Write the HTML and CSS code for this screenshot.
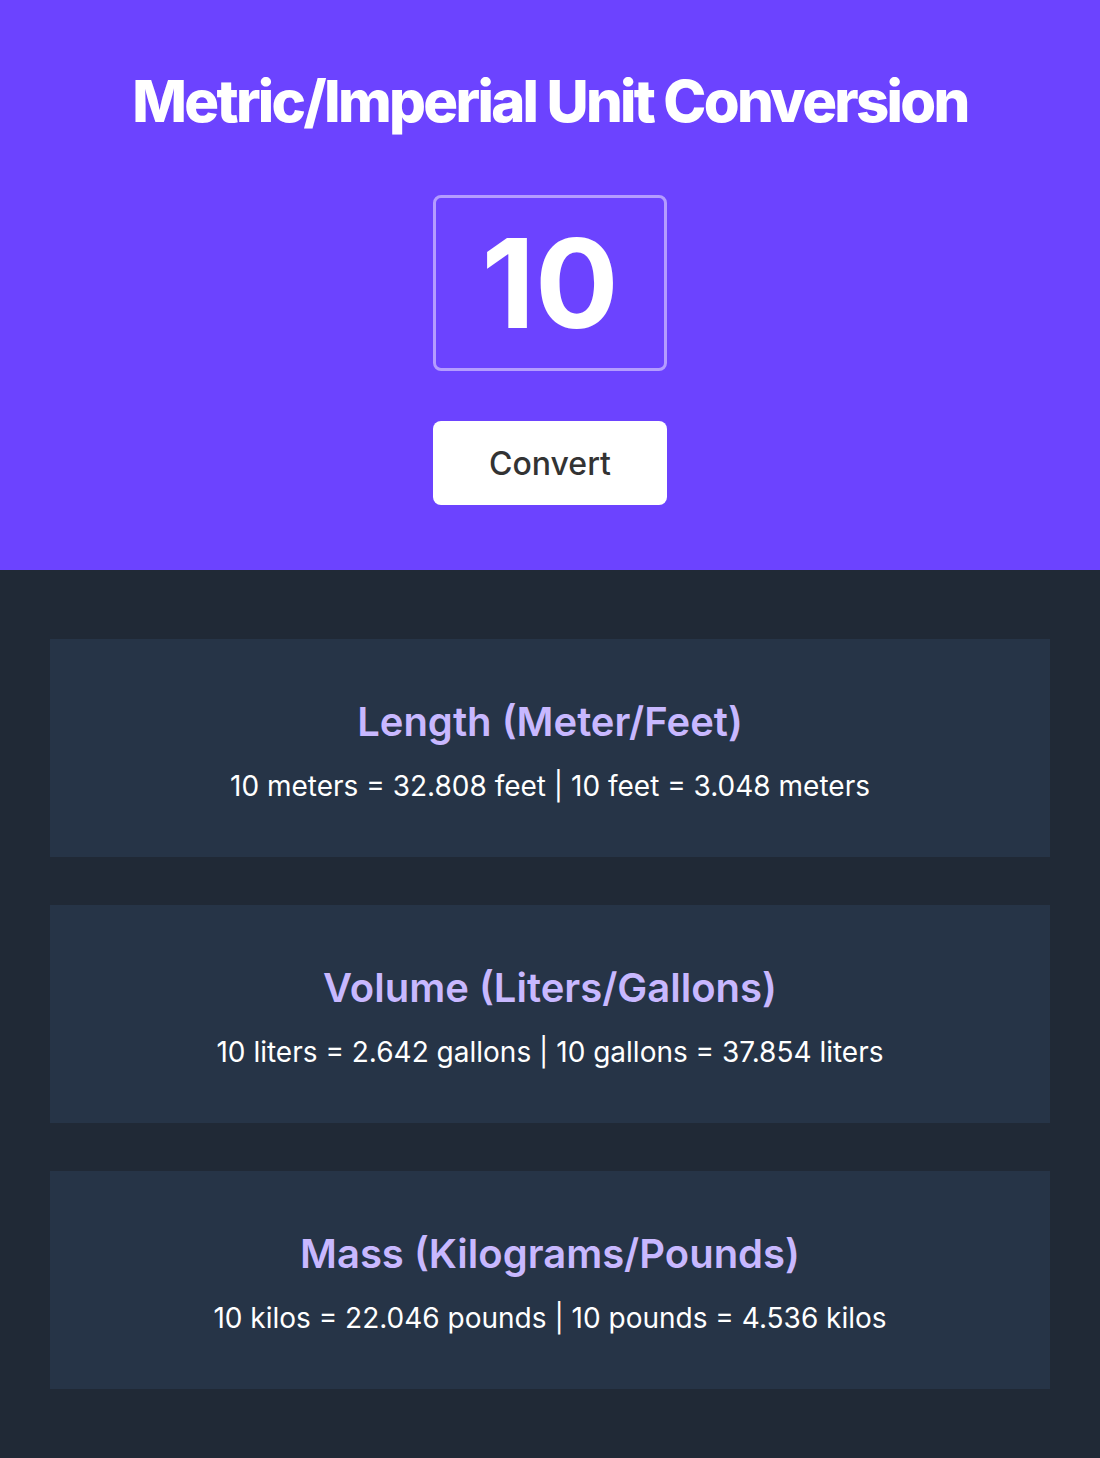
FILE: index.html
```html
<!DOCTYPE html>
<html lang="en">
<head>
<meta charset="utf-8">
<title>Metric/Imperial Unit Conversion</title>
<link rel="stylesheet" href="styles.css">
</head>
<body>
<header class="hero">
  <h1 class="hero-title">Metric/Imperial Unit Conversion</h1>
  <input class="value-input" type="text" value="10">
  <button class="convert-btn" type="button">Convert</button>
</header>
<main class="results">
  <section class="card">
    <h2 class="card-title">Length (Meter/Feet)</h2>
    <p class="card-text">10 meters = 32.808 feet | 10 feet = 3.048 meters</p>
  </section>
  <section class="card">
    <h2 class="card-title">Volume (Liters/Gallons)</h2>
    <p class="card-text">10 liters = 2.642 gallons | 10 gallons = 37.854 liters</p>
  </section>
  <section class="card">
    <h2 class="card-title">Mass (Kilograms/Pounds)</h2>
    <p class="card-text">10 kilos = 22.046 pounds | 10 pounds = 4.536 kilos</p>
  </section>
</main>
</body>
</html>
```

FILE: styles.css
```css
* { box-sizing: border-box; }
html, body { margin: 0; padding: 0; }
body {
  font-family: Inter, "Noto Sans", sans-serif;
  background: #202936;
  color: #fff;
}
.hero {
  background: #6c43ff;
  height: 570px;
  display: flex;
  flex-direction: column;
  align-items: center;
  padding-top: 66px;
}
.hero-title {
  margin: 0;
  font-size: 58px;
  font-weight: 800;
  letter-spacing: -0.046em;
  line-height: 70px;
}
.value-input {
  margin-top: 59px;
  width: 234px;
  height: 176px;
  background: transparent;
  border: 3px solid #b49cff;
  border-radius: 8px;
  color: #fff;
  font-family: Inter, sans-serif;
  font-size: 124px;
  font-weight: 700;
  text-align: center;
  letter-spacing: 0;
  padding: 0;
  outline: none;
}
.convert-btn {
  margin-top: 50px;
  width: 234px;
  height: 84px;
  background: #fff;
  border: none;
  border-radius: 8px;
  font-family: Inter, sans-serif;
  font-size: 32px;
  font-weight: 500;
  color: #333;
}
.results {
  padding: 69px 50px;
  display: flex;
  flex-direction: column;
  gap: 48px;
}
.card {
  background: #263447;
  height: 218px;
  padding-top: 59px;
  text-align: center;
}
.card-title {
  margin: 0;
  font-size: 40px;
  font-weight: 600;
  line-height: 48px;
  color: #c8b8ff;
}
.card-text {
  margin: 18px 0 0;
  font-size: 28px;
  line-height: 44px;
  color: #fff;
}
```
